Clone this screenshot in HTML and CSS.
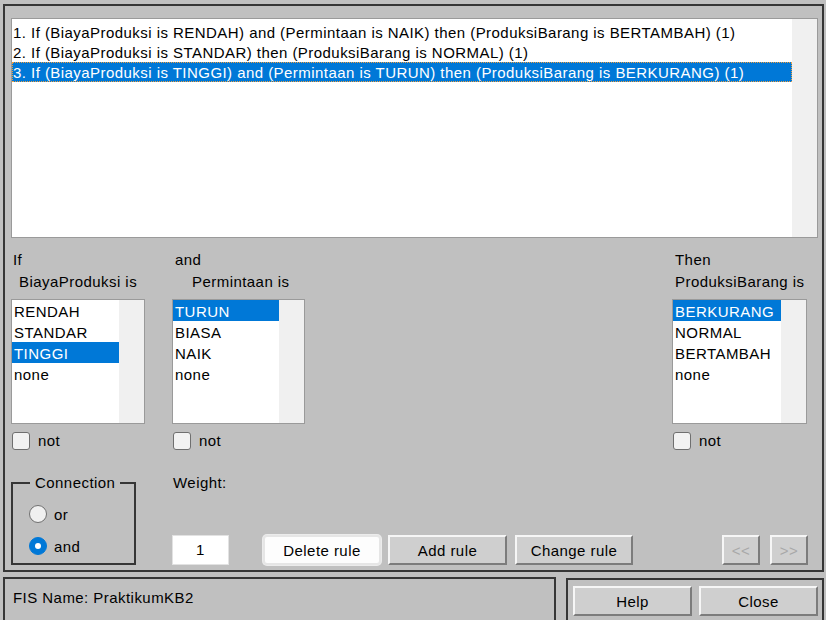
FILE: index.html
```html
<!DOCTYPE html>
<html>
<head>
<meta charset="utf-8">
<link rel="stylesheet" href="styles.css">
</head>
<body>
<div class="panel">
  <div class="rulelist">
    <div class="items">
      <div class="row">1. If (BiayaProduksi is RENDAH) and (Permintaan is NAIK) then (ProduksiBarang is BERTAMBAH) (1)</div>
      <div class="row">2. If (BiayaProduksi is STANDAR) then (ProduksiBarang is NORMAL) (1)</div>
      <div class="row sel focus">3. If (BiayaProduksi is TINGGI) and (Permintaan is TURUN) then (ProduksiBarang is BERKURANG) (1)</div>
    </div>
    <div class="scroll"></div>
  </div>

  <div class="vars">
    <div class="col col1">
      <div class="lbl"><div class="l1">If</div><div class="l2 ind1">BiayaProduksi is</div></div>
      <div class="list">
        <div class="items">
          <div class="opt">RENDAH</div>
          <div class="opt">STANDAR</div>
          <div class="opt sel">TINGGI</div>
          <div class="opt">none</div>
        </div>
        <div class="scroll"></div>
      </div>
      <div class="chk"><span class="box"></span><span>not</span></div>
    </div>
    <div class="col col2">
      <div class="lbl"><div class="l1 ind0">and</div><div class="l2 ind2">Permintaan is</div></div>
      <div class="list">
        <div class="items">
          <div class="opt sel">TURUN</div>
          <div class="opt">BIASA</div>
          <div class="opt">NAIK</div>
          <div class="opt">none</div>
        </div>
        <div class="scroll"></div>
      </div>
      <div class="chk"><span class="box"></span><span>not</span></div>
    </div>
    <div class="col col3">
      <div class="lbl"><div class="l1 ind0">Then</div><div class="l2 ind0">ProduksiBarang is</div></div>
      <div class="list">
        <div class="items">
          <div class="opt sel">BERKURANG</div>
          <div class="opt">NORMAL</div>
          <div class="opt">BERTAMBAH</div>
          <div class="opt">none</div>
        </div>
        <div class="scroll"></div>
      </div>
      <div class="chk"><span class="box"></span><span>not</span></div>
    </div>
  </div>

  <div class="controls">
    <fieldset class="conn">
      <legend>Connection</legend>
      <div class="radio"><span class="dot"></span><span>or</span></div>
      <div class="radio"><span class="dot on"></span><span>and</span></div>
    </fieldset>
    <div class="weight">
      <div class="wlbl">Weight:</div>
      <div class="winput">1</div>
    </div>
    <div class="btns">
      <div class="btn focusbtn">Delete rule</div>
      <div class="btn w119">Add rule</div>
      <div class="btn">Change rule</div>
    </div>
    <div class="nav">
      <div class="btn small dis">&lt;&lt;</div>
      <div class="btn small dis">&gt;&gt;</div>
    </div>
  </div>
</div>

<div class="bottom">
  <div class="status">FIS Name: PraktikumKB2</div>
  <div class="actions">
    <div class="btn big">Help</div>
    <div class="btn big">Close</div>
  </div>
</div>
</body>
</html>
```

FILE: styles.css
```css
* { box-sizing: border-box; }
html, body { margin: 0; padding: 0; }
body {
  background: #c0c0c0;
  font-family: "Liberation Sans", Arial, sans-serif;
  font-size: 15px;
  letter-spacing: 0.45px;
  color: #000;
  width: 826px;
  height: 620px;
  overflow: hidden;
}

.panel {
  margin: 4px 2px 0 3px;
  width: 821px;
  height: 568px;
  border: 2px solid #363636;
  padding: 12px 4px 0 6px;
  display: flex;
  flex-direction: column;
}

.rulelist {
  height: 220px;
  width: 807px;
  border: 1px solid #9a9a9a;
  background: #fff;
  display: flex;
}
.rulelist .items { flex: 1; padding-top: 3px; min-width: 0; }
.rulelist .row {
  height: 20px;
  line-height: 21px;
  padding-left: 1px;
  white-space: nowrap;
}
.sel { background: #0078d7; color: #fff; }
.focus { outline: 1px dotted #f0a040; outline-offset: -1px; }
.scroll { width: 25px; background: #f0f0f0; flex: none; }

.vars { display: flex; margin-top: 11px; }
.col { display: flex; flex-direction: column; }
.col1 { width: 134px; }
.col2 { width: 133px; margin-left: 27px; }
.col3 { width: 135px; margin-left: 367px; }
.lbl { line-height: 22px; height: 42px; white-space: nowrap; }
.l1 { padding-left: 2px; }
.ind0 { padding-left: 3px; }
.ind1 { padding-left: 8px; }
.ind2 { padding-left: 20px; }

.list {
  margin-top: 8px;
  height: 125px;
  border: 1px solid #9a9a9a;
  background: #fff;
  display: flex;
}
.list .items { flex: 1; }
.opt { height: 21px; line-height: 23px; padding-left: 2px; white-space: nowrap; }

.chk { display: flex; align-items: center; margin-top: 7px; height: 19px; gap: 8px; padding-left: 1px; }
.box {
  width: 18px; height: 18px;
  border: 1px solid #6f6f6f;
  border-radius: 3px;
  background: #f2f2f2;
}

.controls { display: flex; margin-top: 24px; height: 91px; }
.conn {
  margin: 0;
  width: 125px;
  border: 2px solid #363636;
  padding: 14px 0 0 16px;
  min-width: 0;
}
.conn legend { padding: 0 5px; margin-left: 1px; line-height: 17px; }
.radio { display: flex; align-items: center; gap: 7px; height: 18px; margin-bottom: 14px; }
.dot {
  width: 18px; height: 18px;
  border-radius: 50%;
  border: 1px solid #707070;
  background: #f0f0f0;
}
.dot.on { background: #0078d7; border-color: #0078d7; position: relative; }
.dot.on::after {
  content: ""; position: absolute; left: 5px; top: 5px;
  width: 6px; height: 6px; border-radius: 50%; background: #fff;
}

.weight {
  margin-left: 36px;
  width: 57px;
  display: flex;
  flex-direction: column;
  justify-content: space-between;
}
.wlbl { line-height: 17px; padding-left: 1px; }
.winput {
  height: 30px;
  background: #fff;
  border: 1px solid #e2e2e2;
  text-align: center;
  line-height: 28px;
}

.btns { display: flex; align-self: flex-end; margin-left: 34px; gap: 7px; }
.btn {
  width: 118px;
  height: 30px;
  background: #cfcfcf;
  border-top: 2px solid #f6f6f6;
  border-left: 2px solid #f6f6f6;
  border-bottom: 2px solid #7c7c7c;
  border-right: 2px solid #7c7c7c;
  text-align: center;
  line-height: 27px;
  white-space: nowrap;
}
.btn.w119 { width: 119px; }
.btns .btn + .btn + .btn { margin-left: 1px; }
.focusbtn {
  background: #fdfdfd;
  border: 2px solid #e6e6e6;
  border-radius: 4px;
  box-shadow: 0 0 0 1px #ececec;
}
.nav { display: flex; align-self: flex-end; margin-left: 89px; gap: 10px; }
.btn.small { width: 38px; }
.dis { color: #a8a8a8; }

.bottom { display: flex; margin-top: 5px; margin-left: 3px; }
.status {
  width: 553px;
  height: 60px;
  border: 2px solid #363636;
  padding: 10px 0 0 8px;
  line-height: 17px;
}
.actions {
  margin-left: 10px;
  margin-top: 1px;
  width: 258px;
  height: 60px;
  border: 2px solid #363636;
  padding: 6px 0 0 5px;
  display: flex;
  gap: 7px;
}
.btn.big { width: 119px; }
```
